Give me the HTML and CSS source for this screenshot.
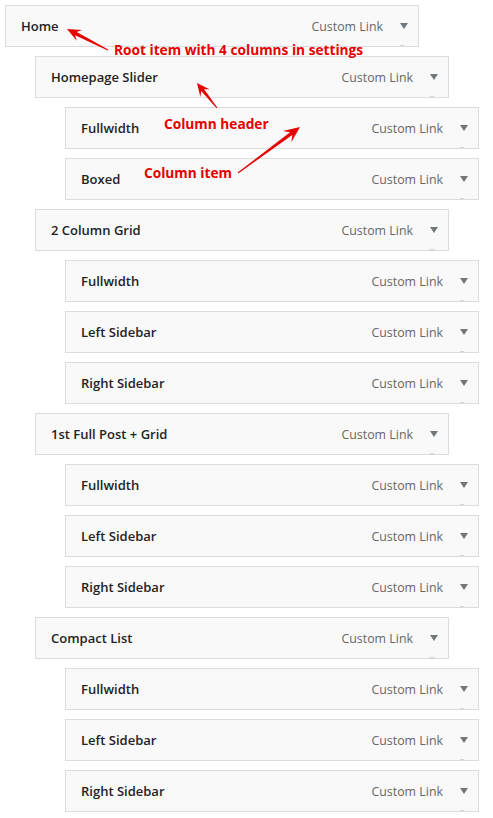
FILE: index.html
```html
<!DOCTYPE html>
<html>
<head>
<meta charset="utf-8">
<link rel="stylesheet" href="styles.css">
</head>
<body>
<div class="menu">
  <div class="item d0"><span class="title">Home</span><span class="type">Custom Link</span><span class="caret"></span></div>
  <div class="item d1"><span class="title">Homepage Slider</span><span class="type">Custom Link</span><span class="caret"></span></div>
  <div class="item d2"><span class="title">Fullwidth</span><span class="type">Custom Link</span><span class="caret"></span></div>
  <div class="item d2"><span class="title">Boxed</span><span class="type">Custom Link</span><span class="caret"></span></div>
  <div class="item d1"><span class="title">2 Column Grid</span><span class="type">Custom Link</span><span class="caret"></span></div>
  <div class="item d2"><span class="title">Fullwidth</span><span class="type">Custom Link</span><span class="caret"></span></div>
  <div class="item d2"><span class="title">Left Sidebar</span><span class="type">Custom Link</span><span class="caret"></span></div>
  <div class="item d2"><span class="title">Right Sidebar</span><span class="type">Custom Link</span><span class="caret"></span></div>
  <div class="item d1"><span class="title">1st Full Post + Grid</span><span class="type">Custom Link</span><span class="caret"></span></div>
  <div class="item d2"><span class="title">Fullwidth</span><span class="type">Custom Link</span><span class="caret"></span></div>
  <div class="item d2"><span class="title">Left Sidebar</span><span class="type">Custom Link</span><span class="caret"></span></div>
  <div class="item d2"><span class="title">Right Sidebar</span><span class="type">Custom Link</span><span class="caret"></span></div>
  <div class="item d1"><span class="title">Compact List</span><span class="type">Custom Link</span><span class="caret"></span></div>
  <div class="item d2"><span class="title">Fullwidth</span><span class="type">Custom Link</span><span class="caret"></span></div>
  <div class="item d2"><span class="title">Left Sidebar</span><span class="type">Custom Link</span><span class="caret"></span></div>
  <div class="item d2"><span class="title">Right Sidebar</span><span class="type">Custom Link</span><span class="caret"></span></div>
</div>

<div class="note note-root">Root item with 4 columns in settings</div>
<div class="note note-header">Column header</div>
<div class="note note-item">Column item</div>

<svg class="arrows" width="493" height="818" viewBox="0 0 493 818">
  <polygon fill="#e60000" points="67,29 82.1,30.1 76.7,32.0 108.2,49.6 107.8,50.4 75.1,35.2 76.7,40.7"/>
  <polygon fill="#e60000" points="197,83 209.8,89.4 204.0,88.9 217.4,107.7 216.6,108.3 201.2,91.1 200.4,97.0"/>
  <polygon fill="#e60000" points="300,127 291.3,142.2 292.3,135.0 238.3,173.4 237.7,172.6 290.1,132.2 283.0,130.9"/>
</svg>
</body>
</html>
```

FILE: styles.css
```css
html, body {
  margin: 0;
  padding: 0;
  background: #ffffff;
}

body {
  position: relative;
  width: 493px;
  height: 818px;
  overflow: hidden;
  font-family: "Open Sans", "Liberation Sans", sans-serif;
}

.menu {
  display: flex;
  flex-direction: column;
  gap: 9px;
  padding: 5px 0 0 5px;
}

.item {
  position: relative;
  box-sizing: border-box;
  width: 414px;
  height: 42px;
  display: flex;
  align-items: center;
  padding: 0 10px 0 15px;
  background: #f9f9f9;
  border: 1px solid #dcdcdc;
}

.item::after {
  content: "";
  position: absolute;
  right: 14px;
  bottom: 0;
  width: 4px;
  height: 1px;
  background: #d4d4d4;
}

.d1 { margin-left: 30px; }
.d2 { margin-left: 60px; }

.title {
  flex: 1;
  font-size: 13px;
  font-weight: 600;
  color: #1d2327;
}

.type {
  font-size: 12.4px;
  color: #666666;
  margin-right: 17px;
}

.caret {
  width: 0;
  height: 0;
  border-left: 4.5px solid transparent;
  border-right: 4.5px solid transparent;
  border-top: 6px solid #72777c;
  margin-top: -1px;
}

.note {
  position: absolute;
  font-size: 13.7px;
  line-height: 14px;
  font-weight: 700;
  color: #e60000;
  white-space: nowrap;
}

.note-root { left: 114px; top: 43px; }
.note-header { left: 164px; top: 117px; }
.note-item { left: 144px; top: 166px; }

.arrows {
  position: absolute;
  left: 0;
  top: 0;
  pointer-events: none;
}
```
